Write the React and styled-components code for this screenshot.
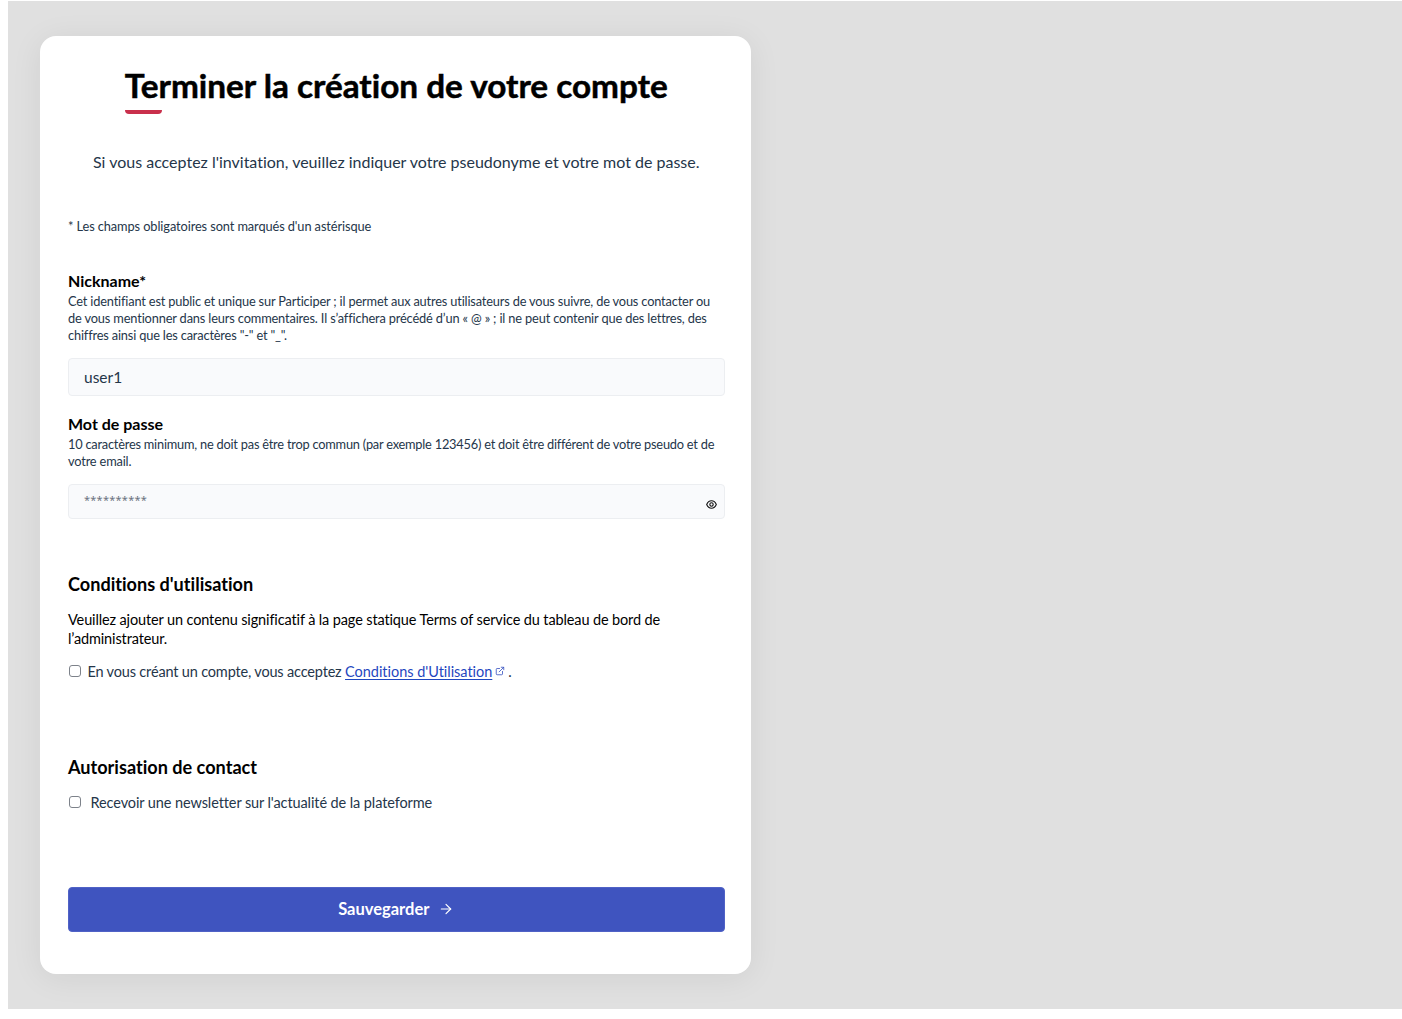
import React from 'react';
import styled, { createGlobalStyle } from 'styled-components';
import { ArrowRight, ExternalLink } from 'lucide-react';

const GlobalStyle = createGlobalStyle`
  html, body {
    margin: 0;
    padding: 0;
    background: #fff;
  }
  body {
    font-family: Lato, "Noto Sans", "Liberation Sans", sans-serif;
    font-variant-ligatures: none;
    color: #25364a;
  }
`;

const Page = styled.div`
  box-sizing: border-box;
  width: 1394px;
  height: 1008px;
  margin: 1px 0 0 8px;
  padding: 35px 0 0 32px;
  background: #e0e0e0;
`;

const Card = styled.main`
  box-sizing: border-box;
  width: 711px;
  height: 938px;
  padding: 0 26.5px 0 28px;
  background: #fff;
  border-radius: 16px;
  box-shadow: 0 4px 32px rgba(0, 0, 0, 0.07);
  display: flex;
  flex-direction: column;
`;

const Title = styled.h1`
  position: relative;
  align-self: center;
  margin: 27px 0 0;
  font-size: 33.3px;
  line-height: 44px;
  font-weight: 700;
  -webkit-text-stroke: 0.5px #000;
  color: #000;
  white-space: nowrap;

  &::after {
    content: '';
    position: absolute;
    left: 0;
    top: 47px;
    width: 37px;
    height: 4px;
    background: #c9304c;
    border-radius: 0 0 4px 4px;
  }
`;

const Intro = styled.p`
  margin: 43px 0 0;
  font-size: 16px;
  line-height: 24px;
  text-align: center;
  white-space: nowrap;
`;

const RequiredNote = styled.p`
  margin: 43px 0 0;
  font-size: 12.8px;
  line-height: 18px;
  letter-spacing: -0.1px;
`;

const Label = styled.label`
  display: block;
  margin-top: ${(p) => p.$top}px;
  padding-bottom: 2px;
  font-size: 16px;
  line-height: 20px;
  font-weight: 700;
  color: #000;
`;

const Hint = styled.p`
  margin: 0;
  font-size: 12.8px;
  line-height: 17px;
  letter-spacing: ${(p) => p.$spacing || -0.17}px;
  white-space: nowrap;
`;

const FieldBox = styled.div`
  box-sizing: border-box;
  display: flex;
  align-items: center;
  justify-content: space-between;
  height: ${(p) => p.$height}px;
  margin-top: ${(p) => p.$top}px;
  padding: 0 7px 0 15px;
  background: #f9fafc;
  border: 1px solid #eceef1;
  border-radius: 4px;
`;

const TextValue = styled.span`
  font-size: 15.5px;
  color: #25364a;
`;

const Stars = styled.span`
  align-self: flex-start;
  margin-top: 6px;
  font-family: "Noto Sans", sans-serif;
  font-size: 11px;
  line-height: 18px;
  letter-spacing: 0.25px;
  color: #6b7280;
`;

const EyeIcon = styled.svg`
  align-self: flex-end;
  width: 11px;
  height: 9px;
  margin-bottom: 9px;
  color: #111;
`;

const SectionTitle = styled.h2`
  margin: ${(p) => p.$top}px 0 0;
  font-size: 18.1px;
  line-height: 24px;
  font-weight: 700;
  color: #000;
`;

const Body = styled.p`
  margin: 14px 0 0;
  font-size: 14.5px;
  line-height: 19px;
  letter-spacing: -0.13px;
  color: #000;
`;

const CheckRow = styled.div`
  display: flex;
  align-items: center;
  margin-top: ${(p) => p.$top}px;
  padding-left: 0.5px;
  font-size: 14.5px;
  line-height: 20px;
  letter-spacing: ${(p) => p.$spacing}px;
  white-space: pre;
`;

const Check = styled.input.attrs({ type: 'checkbox' })`
  appearance: none;
  box-sizing: border-box;
  width: 12px;
  height: 12px;
  margin: -2px ${(p) => p.$gap}px 0 0;
  background: #fff;
  border: 1.2px solid #7d828a;
  border-radius: 3px;
`;

const TermsLink = styled.a`
  color: #1f47c0;
  letter-spacing: -0.03px;
  text-decoration: underline;
  text-underline-offset: 2px;
`;

const LinkIcon = styled(ExternalLink)`
  margin: -3px 3px 0 3px;
  color: #3b54c0;
`;

const SaveButton = styled.button`
  display: flex;
  align-items: center;
  justify-content: center;
  gap: 9px;
  box-sizing: border-box;
  height: 45px;
  margin-top: 74px;
  padding: 0 0 2px;
  background: #3f54bf;
  border: 1px solid #5062c6;
  border-radius: 4px;
  color: #fff;
  font-family: inherit;
  font-size: 16.5px;
  font-weight: 700;
`;

export default function App() {
  return (
    <>
      <GlobalStyle />
      <Page>
        <Card>
          <Title>Terminer la création de votre compte</Title>
          <Intro>Si vous acceptez l'invitation, veuillez indiquer votre pseudonyme et votre mot de passe.</Intro>
          <RequiredNote>* Les champs obligatoires sont marqués d'un astérisque</RequiredNote>

          <Label $top={36}>Nickname*</Label>
          <Hint>Cet identifiant est public et unique sur Participer ; il permet aux autres utilisateurs de vous suivre, de vous contacter ou</Hint>
          <Hint $spacing={-0.15}>de vous mentionner dans leurs commentaires. Il s’affichera précédé d’un « @ » ; il ne peut contenir que des lettres, des</Hint>
          <Hint>chiffres ainsi que les caractères "-" et "_".</Hint>
          <FieldBox $height={38} $top={14}>
            <TextValue>user1</TextValue>
          </FieldBox>

          <Label $top={18}>Mot de passe</Label>
          <Hint $spacing={-0.22}>10 caractères minimum, ne doit pas être trop commun (par exemple 123456) et doit être différent de votre pseudo et de</Hint>
          <Hint>votre email.</Hint>
          <FieldBox $height={35} $top={14}>
            <Stars>**********</Stars>
            <EyeIcon viewBox="0 0 11 9" fill="none" stroke="currentColor" strokeWidth="1.1">
              <path d="M0.7 4.5C1.7 2 3.4 0.8 5.5 0.8S9.3 2 10.3 4.5C9.3 7 7.6 8.2 5.5 8.2S1.7 7 0.7 4.5Z" />
              <circle cx="5.5" cy="4.5" r="1.7" />
            </EyeIcon>
          </FieldBox>

          <SectionTitle $top={53}>Conditions d'utilisation</SectionTitle>
          <Body>
            Veuillez ajouter un contenu significatif à la page statique Terms of service du tableau de bord de
            <br />
            l’administrateur.
          </Body>
          <CheckRow $top={14} $spacing={-0.17}>
            <Check $gap={7} />
            En vous créant un compte, vous acceptez <TermsLink href="#">Conditions d'Utilisation</TermsLink>
            <LinkIcon size={10} strokeWidth={2} />
            .
          </CheckRow>

          <SectionTitle $top={73}>Autorisation de contact</SectionTitle>
          <CheckRow $top={14} $spacing={-0.1}>
            <Check $gap={10} />
            Recevoir une newsletter sur l'actualité de la plateforme
          </CheckRow>

          <SaveButton>
            Sauvegarder
            <ArrowRight size={16} strokeWidth={1.75} />
          </SaveButton>
        </Card>
      </Page>
    </>
  );
}
